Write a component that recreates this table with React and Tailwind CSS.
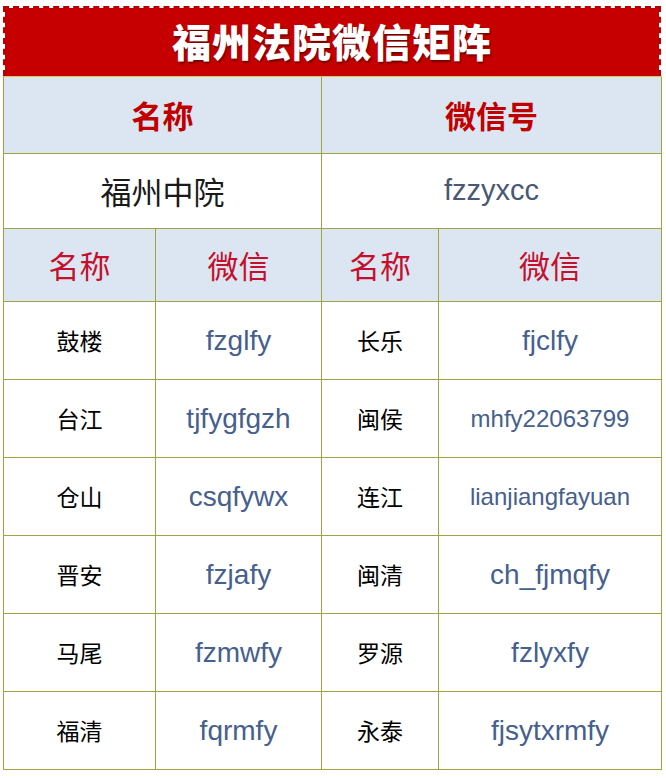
const rows = [
  ['鼓楼', 'fzglfy', '长乐', 'fjclfy'],
  ['台江', 'tjfygfgzh', '闽侯', 'mhfy22063799'],
  ['仓山', 'csqfywx', '连江', 'lianjiangfayuan'],
  ['晋安', 'fzjafy', '闽清', 'ch_fjmqfy'],
  ['马尾', 'fzmwfy', '罗源', 'fzlyxfy'],
  ['福清', 'fqrmfy', '永泰', 'fjsytxrmfy'],
];

const cjk = "font-['Noto_Sans_CJK_SC',sans-serif]";
const latin = "font-['Liberation_Sans','Noto_Sans_CJK_SC',sans-serif]";

function NameCell({ children }) {
  return (
    <div className={`flex h-[77px] items-center justify-center bg-white text-[23px] text-black ${cjk}`}>
      {children}
    </div>
  );
}

function IdCell({ children }) {
  const small = children.length > 11;
  return (
    <div
      className={`flex h-[77px] items-center justify-center bg-white text-[#46608e] ${latin} ${
        small ? 'text-[24px]' : 'text-[28px]'
      }`}
    >
      {children}
    </div>
  );
}

export default function App() {
  return (
    <div className="min-h-screen bg-white pl-[3px] pt-[6px]">
      {/* Title */}
      <div className="flex h-[70px] w-[658px] items-center justify-center border-2 border-b-0 border-dashed border-[#b80000] bg-[#c60000] bg-clip-padding pb-[4px]">
        <h1
          className={`text-[39px] font-black tracking-[1px] text-white ${cjk} [text-shadow:1px_2px_2px_rgba(60,0,0,0.6)]`}
        >
          福州法院微信矩阵
        </h1>
      </div>

      {/* Table */}
      <div className="grid w-[659px] grid-cols-[151px_165px_116px_222px] gap-px border-t border-[#d6c95a] bg-[#9fa53e] p-px pt-0">
        <div className={`col-span-2 flex h-[76px] items-center justify-center bg-[#dce6f2] text-[31px] font-bold text-[#c00000] ${cjk}`}>
          名称
        </div>
        <div className={`col-span-2 flex h-[76px] items-center justify-center bg-[#dce6f2] text-[31px] font-bold text-[#c00000] ${cjk}`}>
          微信号
        </div>

        <div className={`col-span-2 flex h-[74px] items-center justify-center bg-white text-[31px] text-[#1a1a1a] ${cjk}`}>
          福州中院
        </div>
        <div className={`col-span-2 flex h-[74px] items-center justify-center bg-white text-[29px] text-[#4a5874] ${latin}`}>
          fzzyxcc
        </div>

        {['名称', '微信', '名称', '微信'].map((t, i) => (
          <div
            key={i}
            className={`flex h-[72px] items-center justify-center bg-[#dce6f2] text-[31px] text-[#c4102c] ${cjk}`}
          >
            {t}
          </div>
        ))}

        {rows.map(([a, b, c, d]) => (
          <div key={a} className="contents">
            <NameCell>{a}</NameCell>
            <IdCell>{b}</IdCell>
            <NameCell>{c}</NameCell>
            <IdCell>{d}</IdCell>
          </div>
        ))}
      </div>
    </div>
  );
}
